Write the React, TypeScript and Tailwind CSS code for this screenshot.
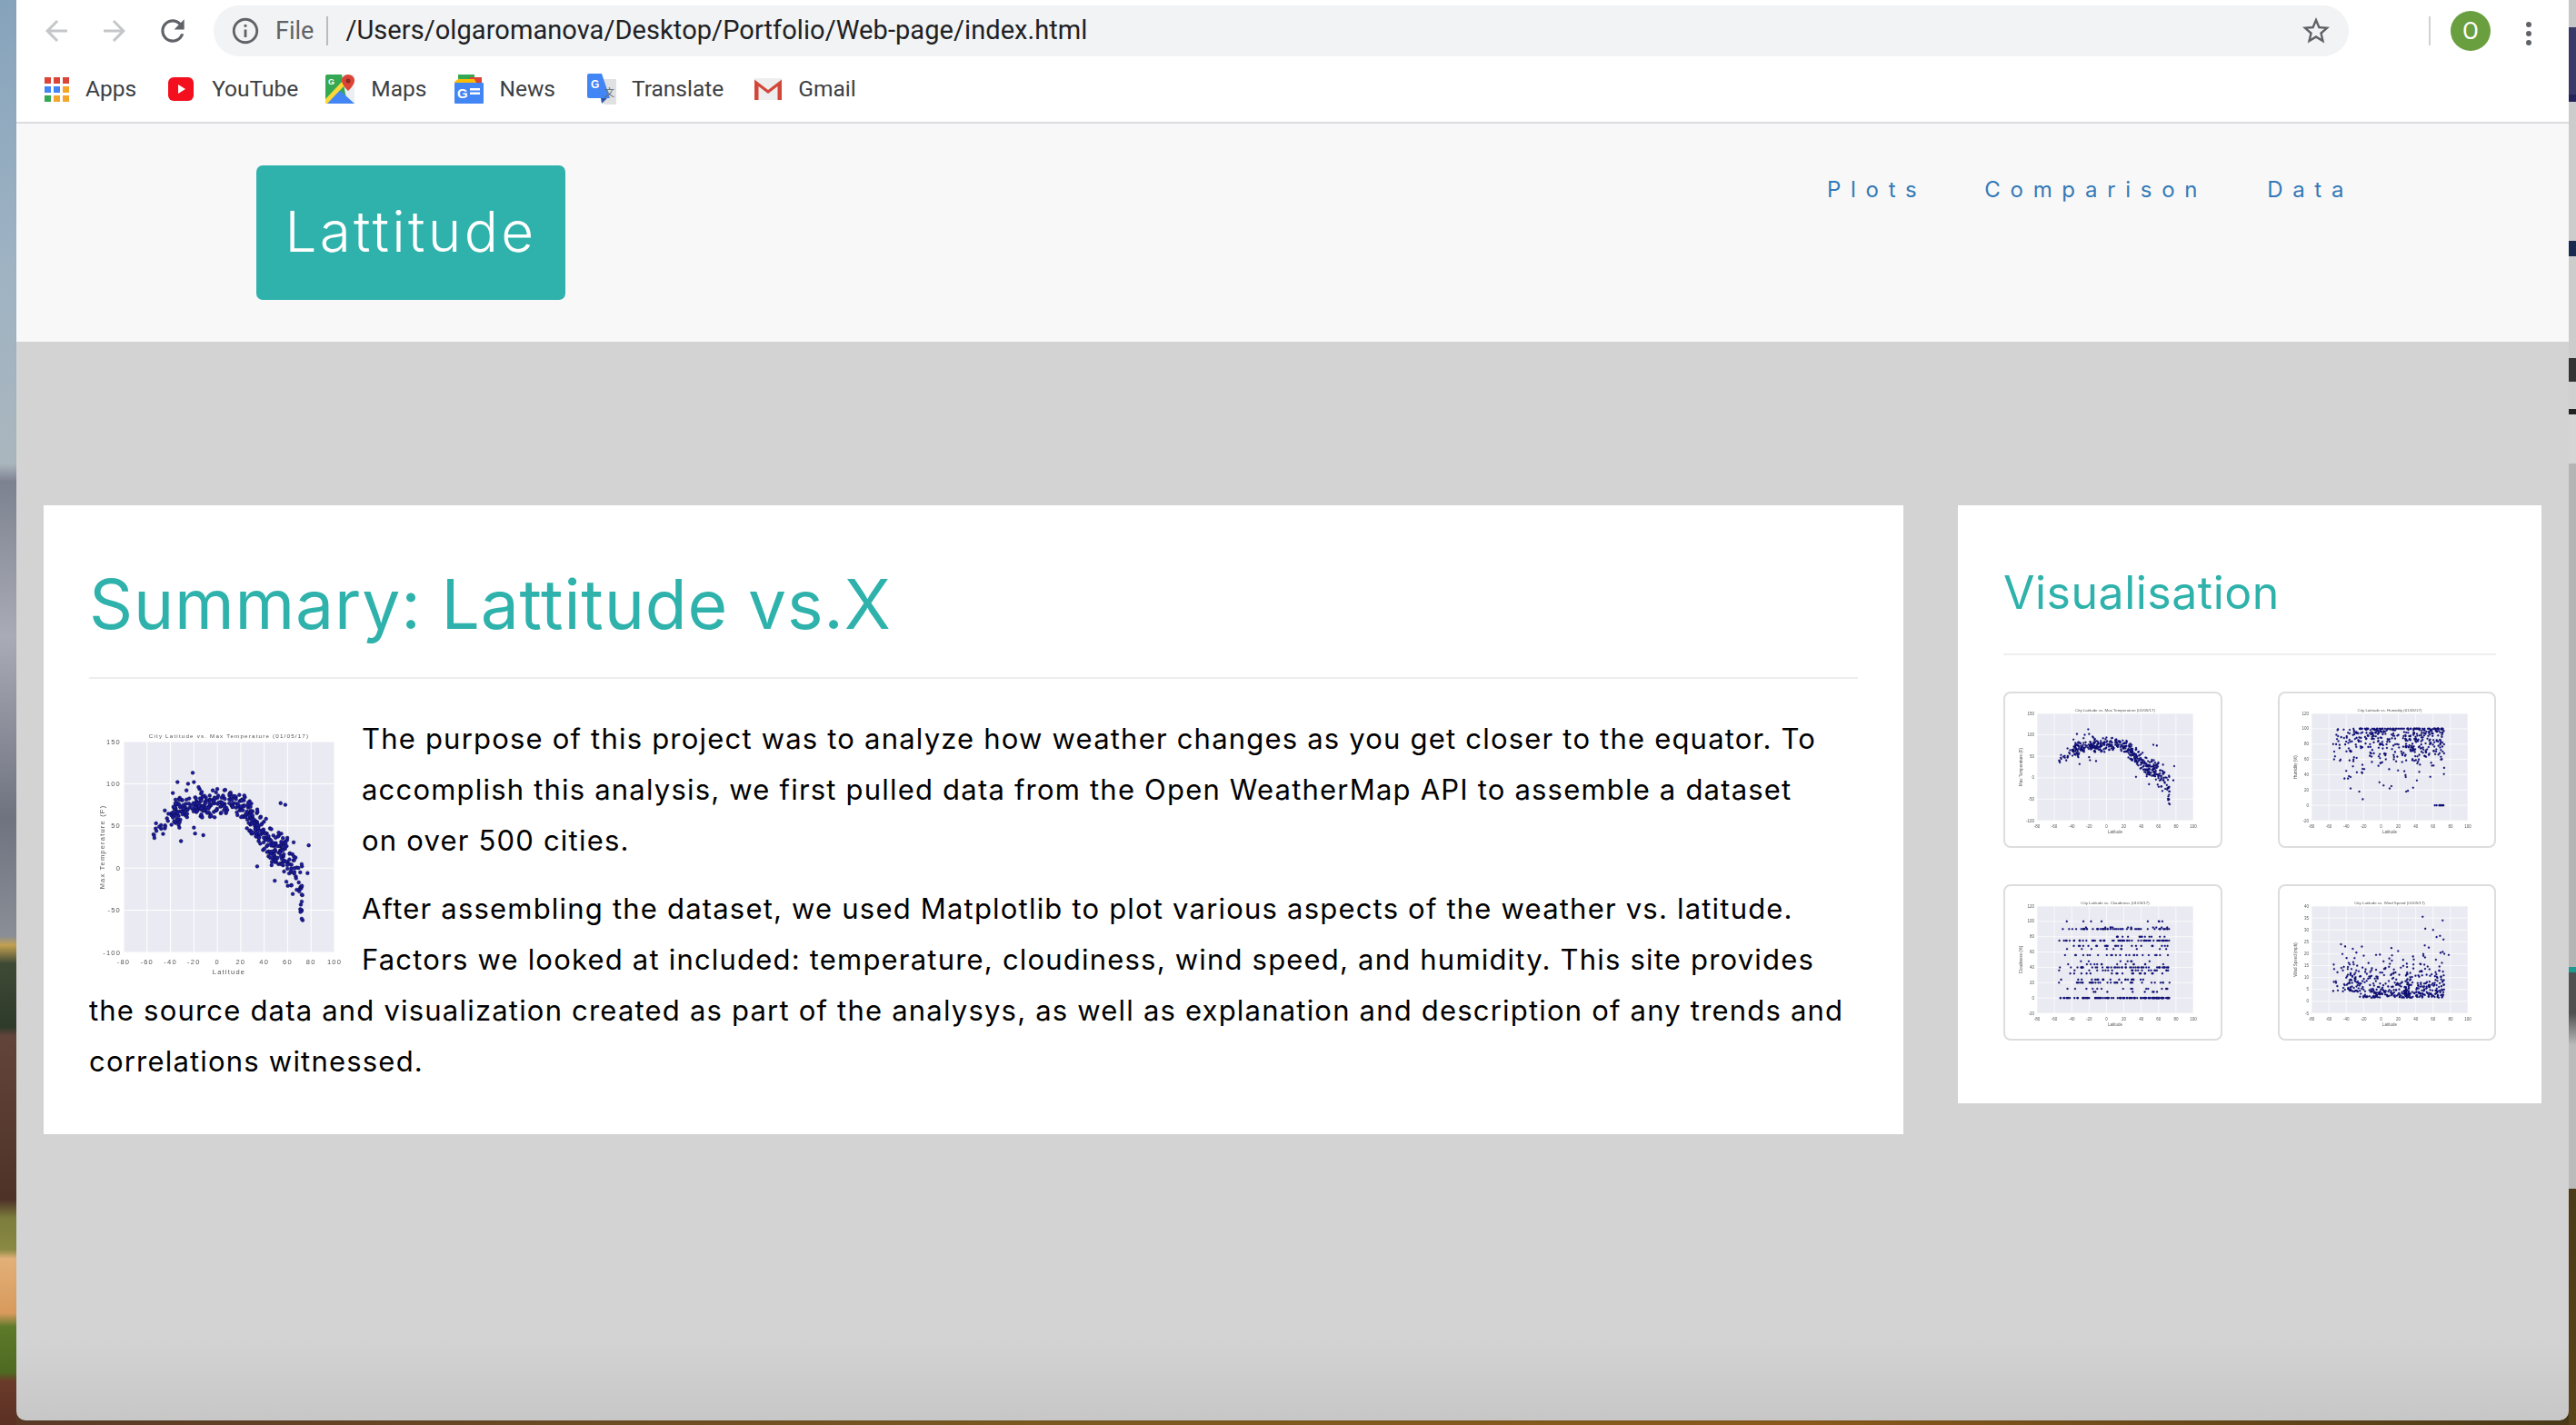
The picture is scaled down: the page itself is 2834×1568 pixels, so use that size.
import React from "react";

type Pt = [number, number];

function prng(seed: number) {
  let a = seed;
  return () => {
    a |= 0;
    a = (a + 0x6d2b79f5) | 0;
    let t = Math.imul(a ^ (a >>> 15), 1 | a);
    t = (t + Math.imul(t ^ (t >>> 7), 61 | t)) ^ t;
    return ((t ^ (t >>> 14)) >>> 0) / 4294967296;
  };
}

function latitudes(r: () => number, n: number) {
  const out: number[] = [];
  for (let i = 0; i < n; i++) {
    const u = r();
    if (u < 0.05) out.push(-55 + r() * 18);
    else if (u < 0.34) out.push(-38 + r() * 38);
    else if (u < 0.55) out.push(r() * 30);
    else out.push(28 + r() * 45);
  }
  return out;
}

function gauss(r: () => number) {
  return (r() + r() + r() + r() - 2) * 1.7;
}

const curve: Pt[] = [[-56, 38], [-45, 55], [-35, 66], [-25, 74], [-10, 76], [0, 77], [15, 78], [25, 66], [35, 46], [45, 26], [55, 20], [60, 6], [70, -12], [73, -35]];

function curveAt(x: number) {
  for (let i = 1; i < curve.length; i++) {
    if (x <= curve[i][0]) {
      const [x0, y0] = curve[i - 1];
      const [x1, y1] = curve[i];
      return y0 + ((x - x0) / (x1 - x0)) * (y1 - y0);
    }
  }
  return -35;
}

function tempData(): Pt[] {
  const r = prng(11);
  const pts: Pt[] = latitudes(r, 470).map((x) => {
    const sd = x > 50 ? 17 : x > 25 ? 10 : 8;
    return [x, curveAt(x) + gauss(r) * sd] as Pt;
  });
  return pts.concat([[-21, 113], [-34, 102], [-25, 100], [-20, 102], [-16, 96], [-38, 89], [-31, 32], [54, 77], [58, 75], [78, 27], [77, -6], [72, -60], [71, -52], [-54, 39], [-52, 44], [-12, 39], [-19, 41], [-20, 48], [34, 2], [49, -15]]);
}

function humidityData(): Pt[] {
  const r = prng(23);
  const pts: Pt[] = latitudes(r, 380).map((x) => {
    const y = 100 - Math.abs(gauss(r)) * 24 - (x > 25 && x < 45 ? r() * 15 : 0);
    return [x, Math.max(30, y)] as Pt;
  });
  for (let i = 0; i < 70; i++) pts.push([-25 + r() * 97, 100]);
  return pts.concat([[62, 0], [64, 0], [67, 0], [68, 0], [69, 0], [70, 0], [71, 0], [72, 0], [-55, 80], [-54, 60], [-40, 45], [-35, 22], [-25, 18], [-21, 8], [29, 18], [31, 19], [37, 23], [3, 26], [10, 22], [12, 25], [-42, 35], [-38, 35], [-35, 37]]);
}

function cloudData(): Pt[] {
  const r = prng(37);
  const levels: Pt[] = [[0, 26], [8, 3], [12, 2], [20, 9], [24, 3], [32, 5], [36, 5], [40, 8], [44, 3], [48, 4], [56, 4], [64, 2], [68, 3], [75, 12], [80, 3], [90, 14], [92, 3], [100, 2]];
  const total = levels.reduce((s, l) => s + l[1], 0);
  return latitudes(r, 480).map((x) => {
    let u = r() * total;
    for (const [v, w] of levels) {
      u -= w;
      if (u <= 0) return [x, v] as Pt;
    }
    return [x, 0] as Pt;
  });
}

function windData(): Pt[] {
  const r = prng(51);
  const pts: Pt[] = latitudes(r, 490).map((x) => {
    const mean = x < -25 ? 8 : x > 45 ? 7 : 5;
    const base = x < -25 ? 4 : 1.5;
    return [x, base - Math.log(1 - r() * 0.985) * mean] as Pt;
  });
  return pts
    .filter((p) => p[1] < 24)
    .concat([[48, 35.5], [71, 34], [51, 30.5], [60, 30], [-46, 24], [-22, 23], [64, 27], [68, 27.5], [72, 26], [78, 19.5]]);
}

const kinds = {
  temp: { data: tempData(), title: "City Latitude vs. Max Temperature (01/05/17)", yLabel: "Max Temperature (F)", yMin: -100, yMax: 150, yStep: 50 },
  humidity: { data: humidityData(), title: "City Latitude vs. Humidity (01/05/17)", yLabel: "Humidity (%)", yMin: -20, yMax: 120, yStep: 20 },
  cloud: { data: cloudData(), title: "City Latitude vs. Cloudiness (01/05/17)", yLabel: "Cloudiness (%)", yMin: -20, yMax: 120, yStep: 20 },
  wind: { data: windData(), title: "City Latitude vs. Wind Speed (01/05/17)", yLabel: "Wind Speed (mph)", yMin: -5, yMax: 40, yStep: 5 },
};

type Kind = keyof typeof kinds;

function Chart({ kind, big }: { kind: Kind; big?: boolean }) {
  const k = kinds[kind];
  const g = big
    ? { w: 287, h: 278, px: 38, py: 16, pw: 232, ph: 232, title: 11.5, tick: 261, xl: 272, yl: 17, fs: 7.5, tfs: 6.2, r: 1.9, sw: 0.5 }
    : { w: 241, h: 172, px: 37, py: 24, pw: 172, ph: 118, title: 21.5, tick: 149.5, xl: 156, yl: 21, fs: 4.5, tfs: 4.4, r: 1.05, sw: 0.2 };
  const X = (v: number) => g.px + ((v + 80) / 180) * g.pw;
  const Y = (v: number) => g.py + ((k.yMax - v) / (k.yMax - k.yMin)) * g.ph;
  const xt: number[] = [];
  for (let v = -80; v <= 100; v += 20) xt.push(v);
  const yt: number[] = [];
  for (let v = k.yMin; v <= k.yMax; v += k.yStep) yt.push(v);
  return (
    <svg width={g.w} height={g.h} viewBox={`0 0 ${g.w} ${g.h}`} className={big ? "blur-[0.5px]" : "blur-[0.6px]"} fontFamily="'Liberation Sans', sans-serif" fill="#555">
      <rect x={g.px} y={g.py} width={g.pw} height={g.ph} fill="#eaeaf2" />
      {xt.map((v) => (
        <line key={v} x1={X(v)} x2={X(v)} y1={g.py} y2={g.py + g.ph} stroke="#fff" strokeWidth={big ? 1 : 0.7} />
      ))}
      {yt.map((v) => (
        <line key={v} y1={Y(v)} y2={Y(v)} x1={g.px} x2={g.px + g.pw} stroke="#fff" strokeWidth={big ? 1 : 0.7} />
      ))}
      {k.data.map(([x, y], i) => (
        <circle key={i} cx={X(x)} cy={Y(y)} r={g.r} fill={big ? "#1b1ba5" : "#14148a"} stroke="#0c0c3c" strokeWidth={g.sw} />
      ))}
      <text x={g.px + g.pw / 2} y={g.title} fontSize={g.tfs} textAnchor="middle">{k.title}</text>
      {xt.map((v) => (
        <text key={v} x={X(v)} y={g.tick} fontSize={g.fs} textAnchor="middle">{v}</text>
      ))}
      {yt.map((v) => (
        <text key={v} x={g.px - 3} y={Y(v) + g.fs / 3} fontSize={g.fs} textAnchor="end">{v}</text>
      ))}
      <text x={g.px + g.pw / 2} y={g.xl} fontSize={g.fs} textAnchor="middle">Latitude</text>
      <text x={g.yl} y={g.py + g.ph / 2} fontSize={g.fs} textAnchor="middle" transform={`rotate(-90 ${g.yl} ${g.py + g.ph / 2})`}>{k.yLabel}</text>
    </svg>
  );
}

function Mat({ d, className, size = 40 }: { d: string; className: string; size?: number }) {
  return (
    <svg viewBox="0 0 24 24" width={size} height={size} className={className} fill="currentColor">
      <path d={d} />
    </svg>
  );
}

const arrow = "M20 11H7.83l5.59-5.59L12 4l-8 8 8 8 1.41-1.41L7.83 13H20v-2z";

function AppsIcon() {
  const c = ["#db4437", "#db4437", "#db4437", "#4285f4", "#4285f4", "#f4a62a", "#34a853", "#f4a62a", "#f4a62a"];
  return (
    <div className="grid w-[27px] grid-cols-3 gap-[3px]">
      {c.map((col, i) => (
        <svg key={i} width="7" height="7"><rect width="7" height="7" fill={col} /></svg>
      ))}
    </div>
  );
}

function YouTubeIcon() {
  return (
    <svg width="28" height="26" viewBox="0 0 28 26">
      <rect width="28" height="26" rx="6" fill="#f40f1e" />
      <path d="M11 8l8 5-8 5z" fill="#fff" />
    </svg>
  );
}

function MapsIcon() {
  return (
    <svg width="32" height="32" viewBox="0 0 32 32">
      <rect width="32" height="32" rx="2" fill="#34a853" />
      <path d="M18 0h14v32h-8z" fill="#eceff1" />
      <path d="M0 32L12 14l20 18z" fill="#4285f4" />
      <path d="M0 27L19 7l3 4L2 32H0z" fill="#fdd835" />
      <path d="M25 0c-4 0-7 3-7 6.500 0 5 7 11.500 7 11.500s7-6.500 7-11.500C32 3 29 0 25 0z" fill="#db4437" />
      <circle cx="25" cy="7" r="2.500" fill="#8e2a20" />
      <text x="3" y="11" fontSize="9" fill="#fff" fontFamily="'Liberation Sans', sans-serif" fontWeight="700">G</text>
    </svg>
  );
}

function NewsIcon() {
  return (
    <svg width="32" height="32" viewBox="0 0 32 32">
      <rect x="4" y="0" width="18" height="8" fill="#34a853" />
      <rect x="16" y="3" width="14" height="8" fill="#db4437" />
      <path d="M0 8l4-3h18l2 4H0z" fill="#fbbc04" />
      <rect y="9" width="32" height="23" rx="1" fill="#4285f4" />
      <text x="3" y="26" fontSize="15" fill="#fff" fontFamily="'Liberation Sans', sans-serif" fontWeight="700">G</text>
      <rect x="17" y="15" width="11" height="2.500" fill="#fff" />
      <rect x="17" y="19.500" width="11" height="2.500" fill="#fff" />
    </svg>
  );
}

function TranslateIcon() {
  return (
    <svg width="32" height="34" viewBox="0 0 32 34">
      <path d="M14 6h18v28H18z" fill="#dfe1e3" />
      <path d="M2 0h14l9 27H2a2 2 0 01-2-2V2a2 2 0 012-2z" fill="#4285f4" />
      <path d="M15 27h7l-6 6z" fill="#3154a3" />
      <text x="4" y="16" fontSize="12" fill="#fff" fontFamily="'Liberation Sans', sans-serif" fontWeight="700">G</text>
      <text x="19" y="25" fontSize="11" fill="#666" fontFamily="'Noto Sans CJK SC', sans-serif">文</text>
    </svg>
  );
}

function GmailIcon() {
  return (
    <svg width="30" height="24" viewBox="0 0 30 24">
      <rect width="30" height="24" rx="1" fill="#eeeeee" />
      <path d="M0 24V1.500L15 13 30 1.500V24h-4.500V9L15 17 4.500 9v15z" fill="#d3473a" />
    </svg>
  );
}

const bookmarks: { label: string; icon: React.ReactNode; w: number; gap: number; tx: number }[] = [
  { label: "Apps", icon: <AppsIcon />, w: 27, gap: 35, tx: 18 },
  { label: "YouTube", icon: <YouTubeIcon />, w: 28, gap: 30, tx: 20 },
  { label: "Maps", icon: <MapsIcon />, w: 32, gap: 31, tx: 18 },
  { label: "News", icon: <NewsIcon />, w: 32, gap: 35, tx: 17 },
  { label: "Translate", icon: <TranslateIcon />, w: 32, gap: 34, tx: 17 },
  { label: "Gmail", icon: <GmailIcon />, w: 30, gap: 0, tx: 18 },
];

function Toolbar() {
  return (
    <div className="h-[136px] shrink-0 border-b-2 border-[#dadce0] bg-white font-['Roboto',sans-serif]">
      <div className="flex h-[68px] items-start pl-[12px] pt-[6px]">
        <div className="flex h-[56px] w-[64px] items-center justify-center text-[#c4c6c9]"><Mat d={arrow} className="" size={36} /></div>
        <div className="flex h-[56px] w-[64px] items-center justify-center text-[#c4c6c9]"><Mat d={arrow} className="rotate-180" size={36} /></div>
        <div className="flex h-[56px] w-[64px] items-center justify-center text-[#5f6368]">
          <Mat d="M17.65 6.35C16.2 4.9 14.21 4 12 4c-4.42 0-7.99 3.58-7.99 8s3.57 8 7.99 8c3.73 0 6.84-2.55 7.73-6h-2.08c-.82 2.33-3.04 4-5.65 4-3.31 0-6-2.69-6-6s2.69-6 6-6c1.66 0 3.14.69 4.22 1.78L13 11h7V4l-2.35 2.35z" className="" size={38} />
        </div>
        <div className="ml-[13px] flex h-[56px] w-[2349px] items-center rounded-full bg-[#f1f3f4] pl-[18px] pr-[18px]">
          <Mat d="M11 7h2v2h-2zm0 4h2v6h-2zm1-9C6.480 2 2 6.480 2 12s4.480 10 10 10 10-4.480 10-10S17.520 2 12 2zm0 18c-4.410 0-8-3.590-8-8s3.590-8 8-8 8 3.590 8 8-3.590 8-8 8z" className="text-[#5f6368]" size={34} />
          <span className="ml-[16px] text-[27px] text-[#5f6368]">File</span>
          <span className="ml-[14px] h-[32px] w-[2px] bg-[#b9bcc0]" />
          <span className="ml-[19px] text-[29px] tracking-[0.07px] text-[#202124]">/Users/olgaromanova/Desktop/Portfolio/Web-page/index.html</span>
          <Mat d="M22 9.240l-7.190-.620L12 2 9.190 8.630 2 9.240l5.460 4.730L5.820 21 12 17.270 18.180 21l-1.630-7.030L22 9.240zM12 15.400l-3.760 2.270 1-4.280-3.320-2.880 4.380-.380L12 6.100l1.710 4.040 4.380.380-3.320 2.880 1 4.280L12 15.400z" className="ml-auto text-[#5f6368]" size={36} />
        </div>
        <span className="ml-[88px] mt-[12px] h-[32px] w-[2px] bg-[#d0d1d3]" />
        <div className="ml-[22px] mt-[6px] flex h-[44px] w-[44px] items-center justify-center rounded-full bg-[#6a9f3f] text-[26px] text-white">O</div>
        <div className="ml-[39px] mt-[18px] flex flex-col gap-[4px]">
          <span className="h-[6px] w-[6px] rounded-full bg-[#5f6368]" />
          <span className="h-[6px] w-[6px] rounded-full bg-[#5f6368]" />
          <span className="h-[6px] w-[6px] rounded-full bg-[#5f6368]" />
        </div>
      </div>
      <div className="flex h-[60px] items-center pl-[31px]">
        {bookmarks.map((b) => (
          <div key={b.label} className="flex items-center" style={{ marginRight: b.gap }}>
            <div className="flex justify-center" style={{ width: b.w }}>{b.icon}</div>
            <span className="text-[24.5px] text-[#3c4043]" style={{ marginLeft: b.tx }}>{b.label}</span>
          </div>
        ))}
      </div>
    </div>
  );
}

function Header() {
  return (
    <header className="flex h-[240px] shrink-0 items-start bg-[#f8f8f8] pl-[264px] pt-[46px]">
      <div className="flex h-[148px] w-[340px] items-center justify-center rounded-[7px] bg-[#2eb2ab] pb-[4px] text-[62px] font-light tracking-[3.3px] text-white">Lattitude</div>
      <nav className="ml-[1388px] mt-[7px] flex text-[24px] leading-[40px] tracking-[10.7px] text-[#337ab7]">
        <a>Plots</a>
        <a className="ml-[64px]">Comparison</a>
        <a className="ml-[66px]">Data</a>
      </nav>
    </header>
  );
}

function Summary() {
  return (
    <section className="w-[2046px] shrink-0 bg-white px-[50px] pb-[52px]">
      <div className="border-b-2 border-[#eeeeee] pb-[39px] pt-[68px]">
        <h1 className="text-[75px] leading-[82px] tracking-[0.8px] text-[#2eb2ab]">Summary: Lattitude vs.X</h1>
      </div>
      <div className="mt-[38px] text-[31px] leading-[56px] tracking-[1.2px] text-black">
        <div className="float-left mr-[13px] mt-[15px] h-[278px] w-[287px]"><Chart kind="temp" big /></div>
        <p>The purpose of this project was to analyze how weather changes as you get closer to the equator. To accomplish this analysis, we first pulled data from the Open WeatherMap API to assemble a dataset<br />on over 500 cities.</p>
        <p className="mt-[19px]">After assembling the dataset, we used Matplotlib to plot various aspects of the weather vs. latitude.<br />Factors we looked at included: temperature, cloudiness, wind speed, and humidity. This site provides<br />the source data and visualization created as part of the analysys, as well as explanation and description of any trends and<br />correlations witnessed.</p>
      </div>
    </section>
  );
}

function Visual() {
  const list: Kind[] = ["temp", "humidity", "cloud", "wind"];
  return (
    <aside className="ml-[60px] w-[642px] shrink-0 self-start bg-white px-[50px] pb-[69px]">
      <div className="border-b-2 border-[#eeeeee] pb-[36px] pt-[65px]">
        <h2 className="text-[50px] leading-[62px] tracking-[0.5px] text-[#2eb2ab]">Visualisation</h2>
      </div>
      <div className="mt-[40px] grid grid-cols-[241px_240px] justify-between gap-y-[40px]">
        {list.map((k) => (
          <div key={k} className="relative h-[172px] overflow-hidden rounded-[8px] border-2 border-[#dddddd] bg-white">
            <div className="absolute -left-[2px] -top-[2px]"><Chart kind={k} /></div>
          </div>
        ))}
      </div>
    </aside>
  );
}

export default function App() {
  return (
    <div className="flex h-[1568px] w-[2834px] overflow-hidden bg-[#4a3a20] font-['Inter',sans-serif]">
      <div className="h-full w-[18px] shrink-0 bg-[linear-gradient(180deg,#86a3bc_0px,#9fb3c3_300px,#aab6be_510px,#7d8290_530px,#a9acb6_700px,#6f7380_900px,#8a8e96_1030px,#c2a050_1040px,#3f4a35_1060px,#2e3a2a_1130px,#63443a_1140px,#4e3228_1320px,#7c7c3c_1340px,#8a8a44_1375px,#e2b078_1385px,#d89a5c_1445px,#5d7a2a_1460px,#4e6a22_1510px,#6b3a2a_1520px,#5a3024_1568px)]" />
      <div className="flex h-full w-[2808px] shrink-0 flex-col bg-[linear-gradient(90deg,#5a3a26,#7a5a20_40%,#8a5a1c_70%,#4a3a18)]">
        <div className="flex h-[1563px] flex-col overflow-hidden rounded-b-[10px] shadow-[1px_0_2px_rgba(0,0,0,0.35)]">
          <Toolbar />
          <Header />
          <main className="flex flex-1 items-start bg-[linear-gradient(180deg,#d3d3d3_calc(100%-90px),#c7c7c7)] pl-[30px] pt-[180px]">
            <Summary />
            <Visual />
          </main>
        </div>
      </div>
      <div className="h-full w-[8px] shrink-0 bg-[linear-gradient(180deg,#c8c8c8_0px,#c8c8c8_30px,#3a3a68_30px,#3a3a68_104px,#24245a_104px,#24245a_112px,#cccccc_112px,#cccccc_265px,#1a2a50_265px,#1a2a50_282px,#cccccc_282px,#cccccc_394px,#333333_394px,#333333_420px,#d0d0d0_420px,#d0d0d0_450px,#222222_450px,#222222_456px,#d5d5d5_456px,#d5d5d5_510px,#b5b5b5_510px,#b5b5b5_1064px,#1f9a90_1064px,#1f9a90_1070px,#505050_1070px,#505050_1115px,#bbbbbb_1150px,#bbbbbb_1308px,#4a3a18_1308px,#5a4418_1568px)]" />
    </div>
  );
}
